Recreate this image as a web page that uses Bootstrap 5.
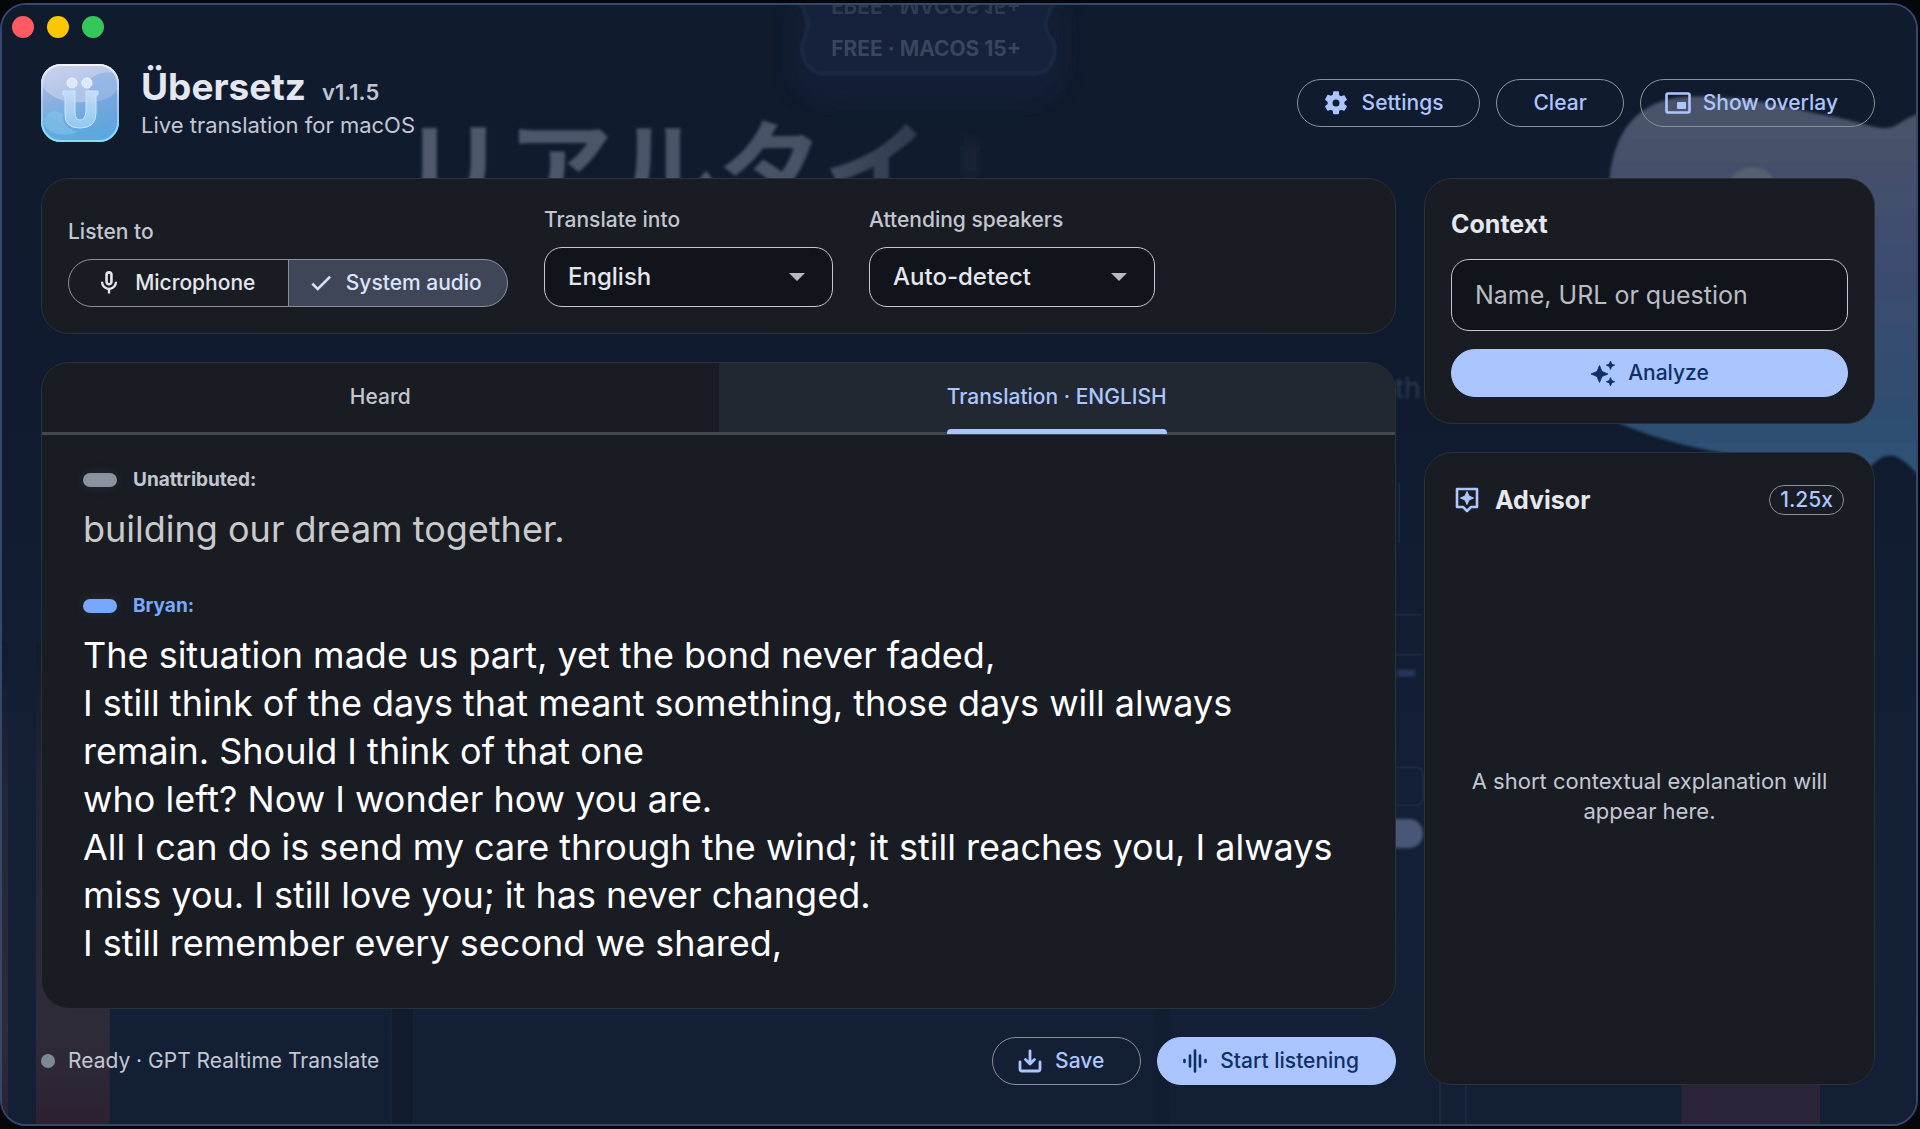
<!DOCTYPE html>
<html lang="en" data-bs-theme="dark">
<head>
<meta charset="utf-8">
<meta name="viewport" content="width=device-width, initial-scale=1">
<title>Übersetz</title>
<link href="https://cdn.jsdelivr.net/npm/bootstrap@5.3.0/dist/css/bootstrap.min.css" rel="stylesheet">
<style>
  body { background: #05070b; font-family: Inter, "Noto Sans CJK JP", sans-serif; color: #e2e5ec; font-size: 22px; line-height: 30px; }
  .app-window { min-height: 100vh; padding: 3px 2px 3px 0; }
  .app-frame { position: relative; overflow: hidden; border: 2px solid #35476b; border-radius: 26px; background: #101b2e; padding: 11px 41px 39px 39px; }
  .backdrop { position: absolute; inset: 0; width: 100%; height: 100%; }
  .app-content { position: relative; }
  .lights { gap: 13px; margin-left: -29px; }
  .light { width: 22px; height: 22px; border-radius: 50%; }
  .app-head { margin: 26px 0 36px; }
  .brand { gap: 22px; }
  .app-title { font-size: 37px; line-height: 44px; font-weight: 700; color: #e4e6f0; }
  .app-version { font-size: 22px; font-weight: 600; color: #c0c5d2; }
  .app-tagline { font-size: 22px; color: #c3c7d3; line-height: 32px; }
  .btn-pill { height: 48px; border-radius: 24px; border: 1px solid #8b9098; color: #adc6ff; font-size: 21px; font-weight: 500; line-height: 30px; padding: 0 36px; display: inline-flex; align-items: center; justify-content: center; gap: 12px; }
  .btn-pill.with-icon { padding: 0 36px 0 24px; }
  .btn-pill.filled { background: #abc5ff; color: #0f2f66; border-color: #abc5ff; }
  .cols { gap: 28px; }
  .side-col { width: 451px; flex: none; gap: 28px; }
  .main-col { gap: 28px; }
  .panel { background: #191c23; border: 1px solid #2b3139; border-radius: 28px; }
  .field { gap: 15px; }
  .field-label { font-size: 21px; color: #c3c6d0; font-weight: 500; line-height: 24px; }
  .source-panel { padding: 29px 26px 26px; gap: 36px; }
  .seg-group { height: 48px; width: 440px; }
  .seg-group .btn { border: 1px solid #8b9098; background: transparent; color: #e4e6ee; font-size: 21px; font-weight: 500; display: flex; align-items: center; justify-content: center; gap: 12px; padding: 0 6px 0 0; border-radius: 24px; }
  .seg-group .btn-check:checked + .btn { background: #3f4658; color: #dbe4fb; border-color: #8b9098; }
  .picker { height: 60px; border: 1px solid #c5c8d0; border-radius: 18px; background-color: #11141a; color: #e4e6ee; font-size: 24px; font-weight: 500; padding: 0 23px;
    background-image: url("data:image/svg+xml,%3Csvg xmlns='http://www.w3.org/2000/svg' viewBox='0 0 16 8'%3E%3Cpath d='M0 0h16L8 8z' fill='%23b8babf'/%3E%3C/svg%3E"); background-size: 16px 8px; background-position: right 27px center; }
  .picker-lang { width: 289px; } .picker-who { width: 286px; }
  .tab-bar { border-bottom: 3px solid #43474f; }
  .tab-bar .nav-link { border: 0; background: transparent; border-radius: 0; height: 69px; padding: 0; color: #c3c6d0; font-size: 21px; font-weight: 500; display: flex; justify-content: center; }
  .tab-bar .nav-link.active { background: #222832; color: #adc6ff; }
  .tab-text { display: flex; align-items: center; position: relative; height: 67px; }
  .nav-link.active .tab-text::after { content: ""; position: absolute; left: 0; right: 0; bottom: -4px; height: 5px; border-radius: 4px 4px 0 0; background: #a9c5ff; }
  .transcript { padding: 30px 42px 36px 41px; }
  .speaker { font-size: 19px; font-weight: 700; gap: 16px; color: #c3c6d0; line-height: 30px; }
  .speaker-chip { width: 34px; height: 14px; border-radius: 7px; background: #8b92a0; box-shadow: 0 0 12px #8b92a022; }
  .speaker.named { color: #79a8ff; } .speaker.named .speaker-chip { background: #79a6ff; }
  .said { font-size: 36px; line-height: 48px; color: #fff; margin: 10px 0 0; }
  .said.past { color: #c9cac9; margin: 10px 0 38px; }
  .state { gap: 13px; }
  .state-dot { width: 14px; height: 14px; border-radius: 50%; background: #7e8894; }
  .context-panel { padding: 26px; }
  .panel-title { font-size: 25px; line-height: 38px; font-weight: 700; color: #e6e8ee; }
  .ask-input { height: 72px; margin: 16px 0 18px; border: 1px solid #c5c8d0; border-radius: 18px; background: #11141a; font-size: 25px; padding: 0 23px; color: #e4e6ee; }
  .ask-input::placeholder { color: #b9bcc3; opacity: 1; }
  .advisor-panel { padding: 28px 30px 12px; }
  .rate { height: 30px; border: 1px solid #8b9098; border-radius: 15px; padding: 0 10px; font-size: 21px; font-weight: 500; line-height: 28px; color: #adc6ff; background: transparent; }
  .foot { color: #c3c7d3; }
  .state-text { font-size: 21px; }
</style>
</head>
<body>
<div class="app-window d-flex">
<div class="app-frame flex-grow-1 d-flex flex-column">
  <svg class="backdrop" viewBox="0 0 1918 1123" preserveAspectRatio="none" aria-hidden="true">
    <defs>
      <linearGradient id="sky" x1="0" y1="0" x2="0" y2="1"><stop offset="0" stop-color="#101b2e"/><stop offset=".35" stop-color="#101b2f"/><stop offset=".75" stop-color="#142036"/><stop offset="1" stop-color="#131f34"/></linearGradient>
      <linearGradient id="ghost" x1="0" y1="0" x2="0" y2="1"><stop offset="0" stop-color="#4b5368"/><stop offset=".45" stop-color="#3c4c70"/><stop offset=".8" stop-color="#2f4d6f"/><stop offset="1" stop-color="#2d5377"/></linearGradient>
      <linearGradient id="ember" x1="0" y1="0" x2="0" y2="1"><stop offset="0" stop-color="#101b2e"/><stop offset=".3" stop-color="#232635"/><stop offset=".8" stop-color="#2e2c38"/><stop offset="1" stop-color="#2c2033"/></linearGradient>
      <linearGradient id="fade" gradientUnits="userSpaceOnUse" x1="400" y1="0" x2="930" y2="0"><stop offset="0" stop-color="#4f596c"/><stop offset=".75" stop-color="#475266"/><stop offset="1" stop-color="#2d394c"/></linearGradient>
      <filter id="soft"><feGaussianBlur stdDeviation="1.6"/></filter>
      <filter id="softer"><feGaussianBlur stdDeviation="10"/></filter>
    </defs>
    <rect width="1918" height="1123" fill="url(#sky)"/>
    <rect x="34" y="640" width="74" height="490" fill="url(#ember)"/>
    <rect x="-4" y="640" width="10" height="490" fill="url(#ember)"/>
    <path d="M390 1000v123M412 1000v123" stroke="#1b2a3d"/>
    <rect x="391" y="1000" width="21" height="123" fill="#111c2e"/>
    <rect x="1156" y="1000" width="14" height="123" fill="#111d30"/>
    <path d="M1441 1080v50M1467 1080v50" stroke="#1c2a40" stroke-width="2"/>
    <rect x="1683" y="1040" width="139" height="90" fill="#2b2337"/>
    <g filter="url(#soft)">
      <path d="M1611 173C1616 126 1640 94 1690 92C1750 90 1800 106 1840 113C1870 120 1884 127 1896 122Q1908 114 1922 108V474C1900 448 1888 446 1872 464C1800 460 1700 456 1612 416Z" fill="url(#ghost)"/>
      <path d="M1730 180q6-17 24-17t24 17z" fill="#55606f"/>
    </g>
    <rect x="792" y="-20" width="274" height="120" rx="40" fill="#12213c" opacity=".5" filter="url(#softer)"/>
    <g filter="url(#soft)">
      <path d="M799 -4Q806 8 808 20Q806 30 802 40C800 58 812 69 824 69H1034C1048 69 1058 56 1054 38Q1046 28 1046 18Q1048 6 1056 -4" fill="#12213a" stroke="#20324c" stroke-width="2"/>
    </g>
    <g font-family="Inter" font-weight="700" font-size="21" fill="#39465c" text-anchor="middle">
      <text x="926" y="51">FREE · MACOS 15+</text>
      <g transform="scale(1,-1)" opacity=".7"><text x="926" y="7">FREE · MACOS 15+</text></g>
    </g>
    <g font-family="Noto Sans CJK JP" font-weight="700" font-size="106" filter="url(#soft)">
      <text x="400" y="205" fill="url(#fade)">リアルタイ</text>
    </g>
    <rect x="962" y="135" width="16" height="40" fill="#1a273a" filter="url(#softer)"/>
    <text x="1396" y="394" font-family="Inter" font-size="28" fill="#2c3a55" filter="url(#soft)">th</text>
    <path d="M1390 612h32M1390 652h32M1390 765h26q8 0 8 8v22q0 8-8 8h-26M1400 480v60" fill="none" stroke="#1a2942" stroke-width="2"/>
    <rect x="1398" y="667" width="18" height="7" fill="#26355a" filter="url(#soft)"/>
    <rect x="1370" y="817" width="54" height="29" rx="14" fill="#485678" filter="url(#soft)"/>
  </svg>

  <div class="app-content flex-grow-1 d-flex flex-column">
    <div class="lights d-flex" aria-hidden="true">
      <span class="light" style="background:#ff5a5f"></span><span class="light" style="background:#fdc700"></span><span class="light" style="background:#34c759"></span>
    </div>

    <header class="app-head d-flex align-items-center justify-content-between">
      <div class="brand d-flex align-items-center">
        <svg width="78" height="78" viewBox="0 0 78 78" role="img" aria-label="Übersetz logo">
          <defs>
            <linearGradient id="lg1" x1="0" y1="0" x2=".3" y2="1"><stop offset="0" stop-color="#c3cbe8"/><stop offset=".45" stop-color="#8cb1e2"/><stop offset="1" stop-color="#5aa6dd"/></linearGradient>
            <linearGradient id="lg2" x1="0" y1="0" x2="0" y2="1"><stop offset="0" stop-color="#c5dcf6"/><stop offset="1" stop-color="#8fc8f2"/></linearGradient>
            <linearGradient id="lg3" x1="0" y1="0" x2="0" y2="1"><stop offset="0" stop-color="#f2f3ff"/><stop offset=".5" stop-color="#a5c4ee"/><stop offset="1" stop-color="#82def2"/></linearGradient>
            <clipPath id="lc"><rect width="78" height="78" rx="20"/></clipPath>
          </defs>
          <g clip-path="url(#lc)">
            <rect width="78" height="78" fill="url(#lg1)"/>
            <path d="M0 0H78V22C72 36 58 38 44 38C24 40 8 34 0 20Z" fill="#d6d9f0" opacity=".5"/>
            <path d="M48 16C60 6 74 6 78 14V60C66 74 56 62 58 46C58 36 44 28 48 16Z" fill="#6f9fdc" opacity=".4"/>
            <path d="M0 50C14 50 18 66 38 68C56 70 70 62 78 56V78H0Z" fill="#5fabe2" opacity=".5"/>
            <path d="M2 56C8 44 16 46 22 50C20 60 28 64 36 68C22 74 4 70 2 56Z" fill="#8fd6ea" opacity=".35"/>
          </g>
          <path d="M22 27h12v21q0 8 5 8t6-8V27h12v4h-2v18q0 15-16 15T24 49V31h-2z" fill="url(#lg2)" stroke="#cfe4fa" stroke-width="1"/>
          <circle cx="31" cy="19" r="5" fill="#dbe8fb" stroke="#f2f7ff"/><circle cx="46" cy="19" r="5" fill="#dbe8fb" stroke="#f2f7ff"/>
          <rect x="1" y="1" width="76" height="76" rx="19" fill="none" stroke="url(#lg3)" stroke-width="2"/>
        </svg>
        <div>
          <div class="d-flex align-items-baseline gap-3"><h1 class="app-title m-0">Übersetz</h1><span class="app-version">v1.1.5</span></div>
          <div class="app-tagline">Live translation for macOS</div>
        </div>
      </div>
      <div class="d-flex gap-3">
        <button type="button" class="btn btn-pill with-icon"><svg width="28" height="28" viewBox="0 0 24 24" fill="currentColor" aria-hidden="true"><path d="M19.14 12.94c.04-.3.06-.61.06-.94s-.02-.64-.07-.94l2.03-1.58a.49.49 0 0 0 .12-.61l-1.92-3.32a.49.49 0 0 0-.59-.22l-2.39.96a7 7 0 0 0-1.62-.94l-.36-2.54A.48.48 0 0 0 13.92 2h-3.84a.48.48 0 0 0-.47.41l-.36 2.54c-.59.24-1.13.57-1.62.94l-2.39-.96a.48.48 0 0 0-.59.22L2.74 8.87a.48.48 0 0 0 .12.61l2.03 1.58c-.05.3-.09.63-.09.94s.02.64.07.94l-2.03 1.58a.49.49 0 0 0-.12.61l1.92 3.32c.12.22.37.29.59.22l2.39-.96c.5.38 1.03.7 1.62.94l.36 2.54c.05.24.24.41.48.41h3.84c.24 0 .44-.17.47-.41l.36-2.54a7 7 0 0 0 1.62-.94l2.39.96c.22.08.47 0 .59-.22l1.92-3.32a.48.48 0 0 0-.12-.61zM12 15a3 3 0 1 1 0-6 3 3 0 0 1 0 6z"/></svg>Settings</button>
        <button type="button" class="btn btn-pill">Clear</button>
        <button type="button" class="btn btn-pill with-icon"><svg width="26" height="26" viewBox="0 0 26 26" aria-hidden="true"><rect x="1.5" y="3.5" width="23" height="19" rx="1.5" fill="none" stroke="currentColor" stroke-width="2.6"/><rect x="12" y="12" width="9" height="7" rx="1" fill="currentColor"/></svg>Show overlay</button>
      </div>
    </header>

    <div class="cols d-flex flex-grow-1">
      <main class="main-col d-flex flex-column flex-grow-1">
        <section class="panel source-panel d-flex align-items-end">
          <div class="field d-flex flex-column">
            <span class="field-label" id="src">Listen to</span>
            <div class="seg-group btn-group" role="group" aria-labelledby="src">
              <input type="radio" class="btn-check" name="source" id="mic"><label class="btn w-50" for="mic"><svg width="28" height="28" viewBox="0 0 24 24" fill="currentColor" aria-hidden="true"><path d="M12 14.2c1.8 0 3.2-1.4 3.2-3.2V5a3.2 3.2 0 0 0-6.400 0v6c0 1.800 1.400 3.200 3.200 3.200zM11 5a1 1 0 0 1 2 0v6a1 1 0 0 1-2 0zM17 11a5 5 0 0 1-10 0H5a7 7 0 0 0 6 6.920V21h2v-3.080A7 7 0 0 0 19 11z"/></svg>Microphone</label>
              <input type="radio" class="btn-check" name="source" id="sys" checked><label class="btn w-50" for="sys"><svg width="26" height="26" viewBox="0 0 24 24" fill="currentColor" stroke="currentColor" stroke-width=".5" aria-hidden="true"><path d="M9 16.170 4.830 12l-1.420 1.410L9 19 21 7l-1.410-1.410z"/></svg>System audio</label>
            </div>
          </div>
          <div class="field d-flex flex-column">
            <label class="field-label" for="lang">Translate into</label>
            <select class="form-select picker picker-lang" id="lang"><option>English</option></select>
          </div>
          <div class="field d-flex flex-column">
            <label class="field-label" for="who">Attending speakers</label>
            <select class="form-select picker picker-who" id="who"><option>Auto-detect</option></select>
          </div>
        </section>

        <section class="panel flex-grow-1 overflow-hidden">
          <div class="tab-bar nav nav-justified" role="tablist">
            <button type="button" class="nav-link w-50" role="tab" aria-selected="false"><span class="tab-text">Heard</span></button>
            <button type="button" class="nav-link active w-50" role="tab" aria-selected="true"><span class="tab-text">Translation · ENGLISH</span></button>
          </div>
          <div class="transcript">
            <div class="speaker d-flex align-items-center"><span class="speaker-chip"></span>Unattributed:</div>
            <p class="said past">building our dream together.</p>
            <div class="speaker named d-flex align-items-center"><span class="speaker-chip"></span>Bryan:</div>
            <p class="said">The situation made us part, yet the bond never faded,<br>I still think of the days that meant something, those days will always remain. Should I think of that one<br>who left? Now I wonder how you are.<br>All I can do is send my care through the wind; it still reaches you, I always miss you. I still love you; it has never changed.<br>I still remember every second we shared,</p>
          </div>
        </section>

        <footer class="foot d-flex align-items-center justify-content-between">
          <div class="state d-flex align-items-center"><span class="state-dot"></span><span class="state-text">Ready · GPT Realtime Translate</span></div>
          <div class="d-flex gap-3">
            <button type="button" class="btn btn-pill with-icon"><svg width="26" height="26" viewBox="0 0 26 26" fill="none" stroke="currentColor" stroke-width="2.8" stroke-linecap="round" stroke-linejoin="round" aria-hidden="true"><path d="M13 3v13M8.500 11.500l4.500 4.500 4.500-4.500M3 14v7q0 2 2 2h16q2 0 2-2v-7"/></svg>Save</button>
            <button type="button" class="btn btn-pill with-icon filled"><svg width="26" height="26" viewBox="0 0 26 26" stroke="currentColor" stroke-width="2.6" stroke-linecap="round" aria-hidden="true"><path d="M2.500 12v2M8 7.500v11M13 2.500v21M18 7.500v11M23.500 12v2"/></svg>Start listening</button>
          </div>
        </footer>
      </main>

      <aside class="side-col d-flex flex-column">
        <section class="panel context-panel d-flex flex-column">
          <h2 class="panel-title m-0"><label for="ask">Context</label></h2>
          <input class="form-control ask-input" id="ask" type="text" placeholder="Name, URL or question">
          <button type="button" class="btn btn-pill filled"><svg width="26" height="26" viewBox="0 0 26 26" fill="currentColor" aria-hidden="true"><path d="M9.500 5.500 12 11.500l6 2.500-6 2.500-2.500 6-2.500-6-6-2.500 6-2.500zM20.500 1l1.200 3 3 1.200-3 1.200-1.200 3-1.200-3-3-1.200 3-1.200zM20.500 17.500l1.200 3 3 1.200-3 1.200-1.200 3-1.200-3-3-1.200 3-1.200z" stroke="currentColor" stroke-width=".8" stroke-linejoin="round"/></svg>Analyze</button>
        </section>
        <section class="panel advisor-panel d-flex flex-column flex-grow-1">
          <div class="d-flex align-items-center justify-content-between">
            <h2 class="panel-title m-0 d-flex align-items-center gap-3"><svg width="24" height="28" viewBox="1 0 24 28" aria-hidden="true"><path d="M3 3h20v18h-6l-4 4-4-4H3z" fill="none" stroke="#adc6ff" stroke-width="2.6" stroke-linejoin="round"/><path d="M13 5.500l2 4.500 4.500 2-4.500 2-2 4.500-2-4.500-4.500-2 4.500-2z" fill="#adc6ff" stroke="#adc6ff"/></svg>Advisor</h2>
            <button type="button" class="rate">1.25x</button>
          </div>
          <p class="foot text-center my-auto mx-0">A short contextual explanation will appear here.</p>
        </section>
      </aside>
    </div>
  </div>
</div>
</div>
<script src="https://cdn.jsdelivr.net/npm/bootstrap@5.3.0/dist/js/bootstrap.bundle.min.js"></script>
</body>
</html>
